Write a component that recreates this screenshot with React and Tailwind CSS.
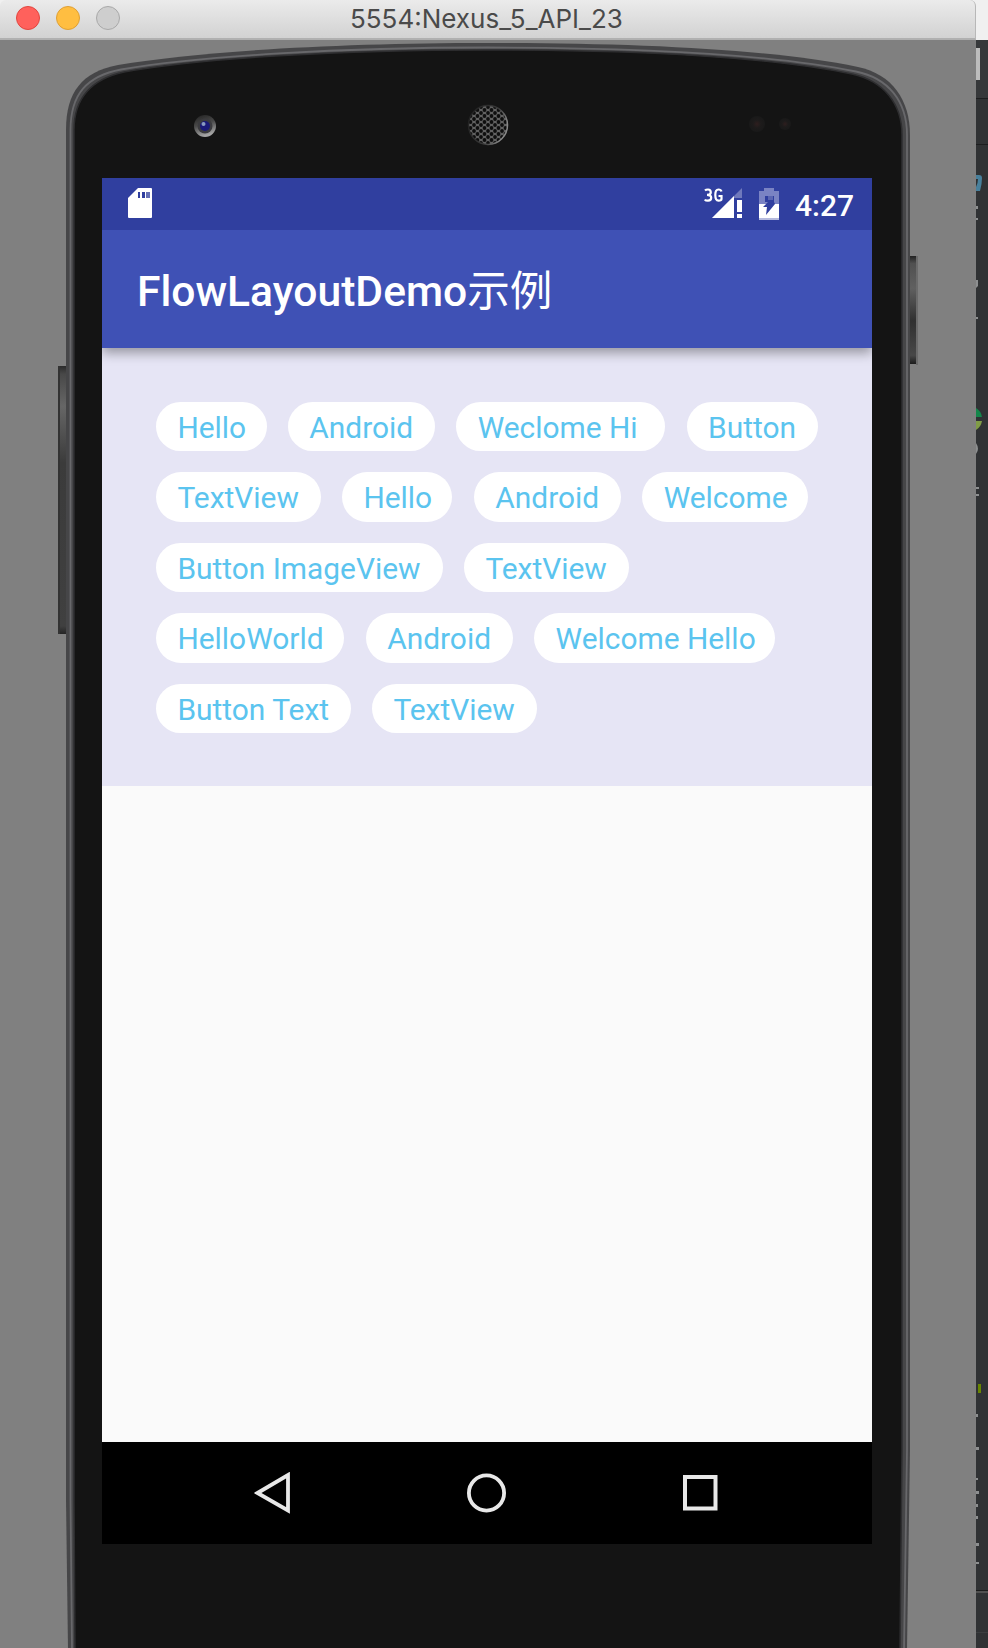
const rows = [
  [
    ['Hello', 'w-[110.5px]'],
    ['Android', 'w-[147px]'],
    ['Weclome Hi ', 'w-[209px]'],
    ['Button', 'w-[131px]'],
  ],
  [
    ['TextView', 'w-[164.6px]'],
    ['Hello', 'w-[110.5px]'],
    ['Android', 'w-[147px]'],
    ['Welcome', 'w-[166px]'],
  ],
  [
    ['Button ImageView', 'w-[286.6px]'],
    ['TextView', 'w-[164.6px]'],
  ],
  [
    ['HelloWorld', 'w-[188.4px]'],
    ['Android', 'w-[147px]'],
    ['Welcome Hello', 'w-[241px]'],
  ],
  [
    ['Button Text', 'w-[194.6px]'],
    ['TextView', 'w-[164.6px]'],
  ],
];

function DeviceFrame() {
  return (
    <svg className="absolute inset-0" width="976" height="1608" viewBox="0 40 976 1608">
      <defs>
        <linearGradient id="leftKey" x1="0" y1="0" x2="0" y2="1">
          <stop offset="0" stopColor="#2b2b2b" />
          <stop offset="0.03" stopColor="#484848" />
          <stop offset="0.15" stopColor="#666" />
          <stop offset="0.36" stopColor="#3b3b3b" />
          <stop offset="0.97" stopColor="#404040" />
          <stop offset="1" stopColor="#242424" />
        </linearGradient>
        <linearGradient id="rightKey" x1="0" y1="0" x2="0" y2="1">
          <stop offset="0" stopColor="#222" />
          <stop offset="0.07" stopColor="#505050" />
          <stop offset="0.3" stopColor="#606060" />
          <stop offset="0.6" stopColor="#303030" />
          <stop offset="0.92" stopColor="#484848" />
          <stop offset="1" stopColor="#1c1c1c" />
        </linearGradient>
        <linearGradient id="lens" x1="0" y1="0" x2="0.3" y2="1">
          <stop offset="0" stopColor="#202020" />
          <stop offset="0.5" stopColor="#4a4a4a" />
          <stop offset="1" stopColor="#a5a5a5" />
        </linearGradient>
        <radialGradient id="sensor">
          <stop offset="0" stopColor="#2e1e1e" />
          <stop offset="0.5" stopColor="#1d1b1b" />
          <stop offset="1" stopColor="#191919" />
        </radialGradient>
        <linearGradient id="meshRim" x1="0" y1="0" x2="1" y2="0.4">
          <stop offset="0" stopColor="#1c1c1c" />
          <stop offset="0.7" stopColor="#3a3a3a" />
          <stop offset="1" stopColor="#888" />
        </linearGradient>
        <pattern id="mesh" x="488" y="125" width="7" height="6" patternUnits="userSpaceOnUse">
          <rect width="7" height="6" fill="#616161" />
          <circle cx="0" cy="0" r="1.9" fill="#0e0e0e" />
          <circle cx="7" cy="0" r="1.9" fill="#0e0e0e" />
          <circle cx="0" cy="6" r="1.9" fill="#0e0e0e" />
          <circle cx="7" cy="6" r="1.9" fill="#0e0e0e" />
          <circle cx="3.5" cy="3" r="1.9" fill="#0e0e0e" />
        </pattern>
      </defs>
      <rect x="58" y="366" width="10" height="268" fill="url(#leftKey)" />
      <rect x="58" y="366" width="2" height="268" fill="#333" />
      <rect x="908" y="256" width="8" height="108" fill="url(#rightKey)" />
      <rect x="916" y="256" width="2" height="109" fill="#6b6b6b" />
      <path
        d="M68 1650 L66 1500 V130 C66 92 82 72 118 65 C200 51 340 43 488 43 C636 43 770 49 858 67 C892 74 910 100 910 135 V1450 L907 1650 Z"
        fill="#464648"
      />
      <path
        d="M72 1650 L70.500 1500 V130 C70.500 94 87 76 121 69.500 C200 56 340 47.500 488 47.500 C636 47.500 770 54 856 71.500 C888 78 907 101 907 135 V1450 L904 1650"
        fill="none"
        stroke="#68686b"
        strokeWidth="1.8"
      />
      <path
        d="M75 1650 L74 1500 V130 C74 98 92 79 124 72 C200 58 340 50 488 50 C636 50 770 57 852 74 C884 81 902 104 902 135 V1450 L900 1650 Z"
        fill="#141414"
        stroke="#2e2e30"
        strokeWidth="1.5"
      />
      <circle cx="205" cy="126" r="11" fill="url(#lens)" />
      <circle cx="205" cy="126" r="7.500" fill="#3b3b3f" />
      <circle cx="205" cy="126" r="5" fill="#1b1a78" />
      <circle cx="203.500" cy="124" r="2" fill="#8a9bc0" />
      <circle cx="488" cy="125" r="19.500" fill="url(#mesh)" stroke="url(#meshRim)" strokeWidth="1.500" />
      <circle cx="757" cy="124" r="8" fill="url(#sensor)" />
      <circle cx="785" cy="124" r="6" fill="url(#sensor)" />
    </svg>
  );
}

function StatusBar() {
  return (
    <div className="flex h-[52px] items-start justify-between bg-[#303f9f] pl-[26px] pr-[17px] pt-[10px] text-white">
      <svg width="24" height="31" viewBox="0 0 24 31">
        <path d="M10 0H23Q24 0 24 1V29Q24 30 23 30H1Q0 30 0 29V10Z" fill="#fff" />
        <path d="M10 4h2v6h-2zM14 4h3v6h-3z" fill="#303f9f" />
        <path d="M18 4h4v6h-4z" fill="#6570b6" />
      </svg>
      <div className="flex items-start">
        <svg width="38" height="32" viewBox="0 0 38 32" className="mr-[17px]">
          <path d="M38 0V10H32V30H8Z" fill="#6f79bc" />
          <path d="M30 8V30H8Z" fill="#fff" />
          <rect x="30" y="10" width="8" height="21" fill="#303f9f" />
          <path d="M33 12h5v12h-5zM33 26h5v4h-5z" fill="#fff" />
          <rect x="0" y="0" width="20" height="14.500" fill="#303f9f" />
          <path d="M1 2.500Q2 1.500 4 1.500Q6.800 1.500 6.800 4.200Q6.800 6.900 3 6.900Q7.200 6.900 7.200 9.800Q7.200 12.700 4 12.700Q1.500 12.700 0.800 11.500M17.500 3.500Q16.800 1.500 14.500 1.500Q11.300 1.500 11.300 7Q11.300 12.700 14.500 12.700Q17.500 12.700 17.500 11V8H14.500" fill="none" stroke="#fff" strokeWidth="2.200" />
        </svg>
        <svg width="21" height="32" viewBox="0 0 21 32">
          <path d="M5 0H15V3H20V17H0V3H5Z" fill="#7a83c3" />
          <path d="M0 16H20V32H0Z" fill="#fff" />
          <path d="M6 8H15V14L16 16L7 27L8 19H4L9 14H6Z" fill="#303f9f" />
          <path d="M9 8H14V12H9Z" fill="#5b66b2" />
          <path d="M0 30H20V32H0Z" fill="#b5bade" />
        </svg>
        <span className="ml-[15px] mt-[2px] w-[60px] whitespace-nowrap text-[30px] font-medium leading-[32px]">4:27</span>
      </div>
    </div>
  );
}

function NavigationBar() {
  return (
    <div className="flex h-[102px] items-center justify-center gap-[174px] bg-black pb-[1px]">
      <svg width="40" height="42" viewBox="0 0 40 42">
        <path d="M35 3V38.500L4.500 21Z" fill="none" stroke="#e8e8e8" strokeWidth="3.800" />
      </svg>
      <svg width="40" height="42" viewBox="0 0 40 42">
        <circle cx="19.500" cy="21" r="17.600" fill="none" stroke="#e8e8e8" strokeWidth="3.800" />
      </svg>
      <svg width="40" height="42" viewBox="0 0 40 42">
        <rect x="4" y="5" width="30.500" height="31.500" fill="none" stroke="#e8e8e8" strokeWidth="4" />
      </svg>
    </div>
  );
}

function BackgroundWindow() {
  return (
    <div className="h-[1648px] w-3 shrink-0 bg-[#f0f0f0] pt-10">
      <svg width="12" height="1608" viewBox="976 40 12 1608" className="block bg-[#303234]">
        <rect x="976" y="40" width="12" height="58" fill="#36383a" />
        <rect x="976" y="48" width="4" height="32" fill="#bcbcbc" />
        <path d="M976 98.500h12M976 144.500h12" stroke="#1d1e1f" strokeWidth="1" />
        <path d="M976 175h3q3 0 3 3q0 6-2 13h-4v-4q2-4 2-8h-2z" fill="#48809c" />
        <path d="M976 206h2v3h-2zM976 218h2v2h-2zM976 280h2v6l-2 2zM976 317h2v2h-2zM976 443q4 6 0 11zM976 487h3v2h-3zM976 494h3v2h-3z" fill="#8d8f90" />
        <path d="M976 408q5 3 6 9h-6z" fill="#14874b" />
        <path d="M976 421h6q-1 6-6 9z" fill="#809c47" />
        <rect x="978" y="1384" width="3" height="9" fill="#688500" />
        <path d="M976 1414h2v3h-2zM976 1447h3v3h-3zM976 1478h2v2h-2zM976 1491h3v3h-3zM976 1504h2v3h-2zM976 1516h2v3h-2zM976 1543h3v3h-3zM976 1562h3v2h-3z" fill="#8d8f90" />
        <path d="M976 1590.500h12" stroke="#1b1c1c" />
        <path d="M976 1592h12" stroke="#515151" strokeWidth="2" />
        <path d="M976 1632.500h12" stroke="#3c3e40" />
      </svg>
    </div>
  );
}

export default function App() {
  return (
    <div className="flex h-[1648px] w-[988px] overflow-hidden bg-[#f0f0f0] font-['Roboto','Noto_Sans_CJK_SC',sans-serif]">
      <div className="flex w-[976px] shrink-0 flex-col">
        <header className="grid h-10 shrink-0 grid-cols-[350px_1fr] items-center rounded-t-[6px] border-b-2 border-r border-b-[#b0b0b0] border-r-[#b8b8b8] bg-linear-to-b from-[#ebebeb] to-[#d2d2d2]">
          <div className="-mt-[3px] flex gap-4 pl-4">
            <span className="size-6 rounded-full border border-[#e2463f] bg-[#ff615c]" />
            <span className="size-6 rounded-full border border-[#dfa035] bg-[#ffbe41]" />
            <span className="size-6 rounded-full border border-[#a9a9a9] bg-[#cecece]" />
          </div>
          <h1 className="whitespace-nowrap font-['Inter',sans-serif] text-[26px] leading-8 text-[#4a4a4a]">5554:Nexus_5_API_23</h1>
        </header>
        <div className="relative flex h-[1608px] flex-col bg-[#808080] pl-[102px] pt-[138px]">
          <DeviceFrame />
          <main className="relative flex h-[1366px] w-[770px] flex-col bg-[#fafafa]">
            <StatusBar />
            <div className="relative z-10 flex h-[118px] items-center bg-[#3f51b5] pl-[35px] pt-[3px] text-[42.600px] text-white shadow-[0_5px_11px_rgba(0,0,0,0.35)] [clip-path:inset(0_0_-20px_0)]">
              <h2 className="whitespace-nowrap font-medium leading-[50px]">
                FlowLayoutDemo<span className="font-normal">示例</span>
              </h2>
            </div>
            <section className="flex h-[438px] flex-col gap-[21.200px] bg-[#e6e5f5] pl-[54px] pt-[54px] text-[29.900px] text-[#5bc4ef]">
              {rows.map((row, i) => (
                <div key={i} className="flex gap-[21.400px]">
                  {row.map(([label, width]) => (
                    <div key={label} className={`${width} h-[49.300px] shrink-0 whitespace-pre rounded-full bg-white pl-[21.400px] leading-[52px]`}>
                      {label}
                    </div>
                  ))}
                </div>
              ))}
            </section>
            <div className="flex-1" />
            <NavigationBar />
          </main>
        </div>
      </div>
      <BackgroundWindow />
    </div>
  );
}
